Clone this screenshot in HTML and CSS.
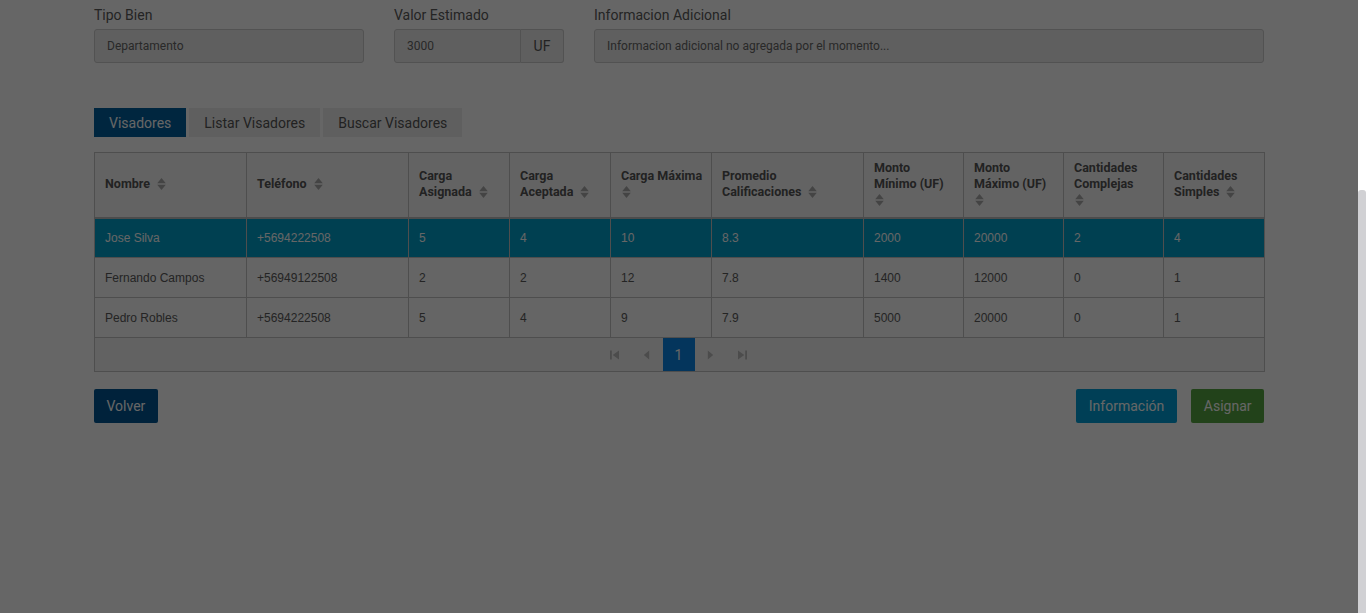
FILE: index.html
```html
<!DOCTYPE html>
<html lang="es">
<head>
<meta charset="utf-8">
<title>Visadores</title>
<link rel="stylesheet" href="styles.css">
</head>
<body>
<div class="page">
  <div class="container">
    <div class="fields">
      <div class="field f-tipo">
        <label class="label">Tipo Bien</label>
        <div class="input">Departamento</div>
      </div>
      <div class="field f-valor">
        <label class="label">Valor Estimado</label>
        <div class="input-group">
          <div class="input grow">3000</div>
          <div class="addon">UF</div>
        </div>
      </div>
      <div class="field f-info">
        <label class="label">Informacion Adicional</label>
        <div class="input">Informacion adicional no agregada por el momento...</div>
      </div>
    </div>

    <div class="tabs">
      <div class="tab active">Visadores</div>
      <div class="tab">Listar Visadores</div>
      <div class="tab">Buscar Visadores</div>
    </div>

    <table class="grid">
      <colgroup>
        <col class="w152"><col class="w162"><col class="w101"><col class="w101"><col class="w101">
        <col class="w152"><col class="w100"><col class="w100"><col class="w100"><col class="w101">
      </colgroup>
      <thead>
        <tr>
          <th>Nombre <svg class="sort" viewBox="0 0 10 14"><path d="M5 0 L10 6 H0 Z M0 8 H10 L5 14 Z"/></svg></th>
          <th>Teléfono <svg class="sort" viewBox="0 0 10 14"><path d="M5 0 L10 6 H0 Z M0 8 H10 L5 14 Z"/></svg></th>
          <th>Carga<br>Asignada <svg class="sort" viewBox="0 0 10 14"><path d="M5 0 L10 6 H0 Z M0 8 H10 L5 14 Z"/></svg></th>
          <th>Carga<br>Aceptada <svg class="sort" viewBox="0 0 10 14"><path d="M5 0 L10 6 H0 Z M0 8 H10 L5 14 Z"/></svg></th>
          <th>Carga Máxima<br><svg class="sort first" viewBox="0 0 10 14"><path d="M5 0 L10 6 H0 Z M0 8 H10 L5 14 Z"/></svg></th>
          <th>Promedio<br>Calificaciones <svg class="sort" viewBox="0 0 10 14"><path d="M5 0 L10 6 H0 Z M0 8 H10 L5 14 Z"/></svg></th>
          <th>Monto<br>Mínimo (UF)<br><svg class="sort first" viewBox="0 0 10 14"><path d="M5 0 L10 6 H0 Z M0 8 H10 L5 14 Z"/></svg></th>
          <th>Monto<br>Máximo (UF)<br><svg class="sort first" viewBox="0 0 10 14"><path d="M5 0 L10 6 H0 Z M0 8 H10 L5 14 Z"/></svg></th>
          <th>Cantidades<br>Complejas<br><svg class="sort first" viewBox="0 0 10 14"><path d="M5 0 L10 6 H0 Z M0 8 H10 L5 14 Z"/></svg></th>
          <th>Cantidades<br>Simples <svg class="sort" viewBox="0 0 10 14"><path d="M5 0 L10 6 H0 Z M0 8 H10 L5 14 Z"/></svg></th>
        </tr>
      </thead>
      <tbody>
        <tr class="selected">
          <td>Jose Silva</td><td>+5694222508</td><td>5</td><td>4</td><td>10</td><td>8.3</td><td>2000</td><td>20000</td><td>2</td><td>4</td>
        </tr>
        <tr>
          <td>Fernando Campos</td><td>+56949122508</td><td>2</td><td>2</td><td>12</td><td>7.8</td><td>1400</td><td>12000</td><td>0</td><td>1</td>
        </tr>
        <tr>
          <td>Pedro Robles</td><td>+5694222508</td><td>5</td><td>4</td><td>9</td><td>7.9</td><td>5000</td><td>20000</td><td>0</td><td>1</td>
        </tr>
      </tbody>
      <tfoot>
        <tr>
          <td colspan="10" class="pager-cell">
            <div class="pager">
              <span class="pg"><svg viewBox="0 0 10 10"><path d="M0 0 H2 V10 H0 Z M10 0 V10 L3 5 Z"/></svg></span>
              <span class="pg"><svg viewBox="0 0 10 10"><path d="M8 0 V10 L2 5 Z"/></svg></span>
              <span class="pg current">1</span>
              <span class="pg"><svg viewBox="0 0 10 10"><path d="M2 0 V10 L8 5 Z"/></svg></span>
              <span class="pg"><svg viewBox="0 0 10 10"><path d="M0 0 V10 L7 5 Z M8 0 H10 V10 H8 Z"/></svg></span>
            </div>
          </td>
        </tr>
      </tfoot>
    </table>

    <div class="actions">
      <button class="btn btn-dark">Volver</button>
      <div class="actions-right">
        <button class="btn btn-info">Información</button>
        <button class="btn btn-green">Asignar</button>
      </div>
    </div>
  </div>
</div>

<div class="backdrop"></div>
<div class="scrollbar"><div class="thumb"></div></div>
</body>
</html>
```
FILE: styles.css
```css
* { box-sizing: border-box; }

html, body {
  margin: 0;
  padding: 0;
  background: #ffffff;
  font-family: Roboto, "Liberation Sans", Arial, sans-serif;
  color: #555555;
}

.page {
  margin-right: 8px;
  padding-top: 5px;
}

.container {
  width: 1170px;
  margin: 0 auto;
}

.fields {
  display: flex;
  gap: 30px;
}

.f-tipo { width: 270px; }
.f-valor { width: 170px; }
.f-info { width: 670px; }

.label {
  display: block;
  font-size: 14px;
  line-height: 20px;
  margin-bottom: 4px;
  color: #5a5a5a;
}

.input {
  height: 34px;
  line-height: 33px;
  border: 1px solid #cccccc;
  border-radius: 3px;
  background: #eeeeee;
  padding: 0 12px;
  font-size: 12px;
  color: #666666;
  white-space: nowrap;
  overflow: hidden;
}

.input-group {
  display: flex;
}

.input-group .grow {
  flex: 1;
  border-radius: 3px 0 0 3px;
}

.addon {
  width: 43px;
  height: 34px;
  line-height: 32px;
  text-align: center;
  font-size: 14px;
  color: #555555;
  background: #eeeeee;
  border: 1px solid #cccccc;
  border-left: none;
  border-radius: 0 3px 3px 0;
}

.tabs {
  display: flex;
  gap: 3px;
  margin-top: 45px;
}

.tab {
  height: 29px;
  line-height: 30px;
  padding: 0 15px;
  font-size: 14px;
  background: #eeeeee;
  color: #555555;
}

.tab.active {
  background: #005f9e;
  color: #ffffff;
}

.grid {
  margin-top: 15px;
  width: 1170px;
  border-collapse: collapse;
  table-layout: fixed;
  border: 1px solid #c4c4c4;
}

.w152 { width: 152px; }
.w162 { width: 162px; }
.w101 { width: 101px; }
.w100 { width: 100px; }

.grid th {
  height: 65px;
  text-align: left;
  vertical-align: middle;
  white-space: nowrap;
  font-weight: 700;
  font-size: 12.5px;
  line-height: 16px;
  color: #555555;
  padding: 5px 4px 6px 10px;
  background: #f8f8f8;
  border: 1px solid #c4c4c4;
  border-bottom: 2px solid #bdbdbd;
}

.sort {
  width: 9px;
  height: 12px;
  fill: #aaaaaa;
  vertical-align: -2px;
  margin-left: 4px;
}

.sort.first {
  margin-left: 1px;
}

.grid td {
  height: 40px;
  padding: 1px 10px 0 10px;
  font-family: "Liberation Sans", Arial, sans-serif;
  font-size: 12px;
  color: #5a5a5a;
  background: #fcfcfc;
  border: 1px solid #c4c4c4;
}

.grid tr.selected td {
  background: #00a0cb;
  color: #ffffff;
}

.grid td.pager-cell {
  height: 33px;
  padding: 0;
  background: #f6f6f6;
}

.pager {
  display: flex;
  justify-content: center;
  align-items: stretch;
  height: 33px;
  padding-right: 2px;
}

.pg {
  width: 32px;
  display: flex;
  align-items: center;
  justify-content: center;
  font-family: Roboto, "Liberation Sans", Arial, sans-serif;
  font-size: 14px;
}

.pg svg {
  width: 9px;
  height: 10px;
  fill: #bdbdbd;
}

.pg.current {
  background: #0a84e6;
  color: #ffffff;
}

.actions {
  display: flex;
  justify-content: space-between;
  margin-top: 17px;
}

.actions-right {
  display: flex;
  gap: 14px;
}

.btn {
  height: 34px;
  padding: 0 12.5px;
  border: none;
  border-radius: 2px;
  font-family: Roboto, "Liberation Sans", Arial, sans-serif;
  font-size: 14px;
  color: #ffffff;
}

.btn-info { padding: 0 13px; }

.btn-dark { background: #005594; }
.btn-info { background: #009fd6; }
.btn-green { background: #56a641; }

.backdrop {
  position: fixed;
  inset: 0;
  background: rgba(0, 0, 0, 0.6);
}

.scrollbar {
  position: fixed;
  top: 0;
  right: 0;
  bottom: 0;
  width: 8px;
  background: #ffffff;
}

.thumb {
  position: absolute;
  top: 190px;
  left: 0;
  right: 0;
  bottom: 0;
  background: #d1d1d4;
  border-radius: 3px 3px 0 0;
}
```
